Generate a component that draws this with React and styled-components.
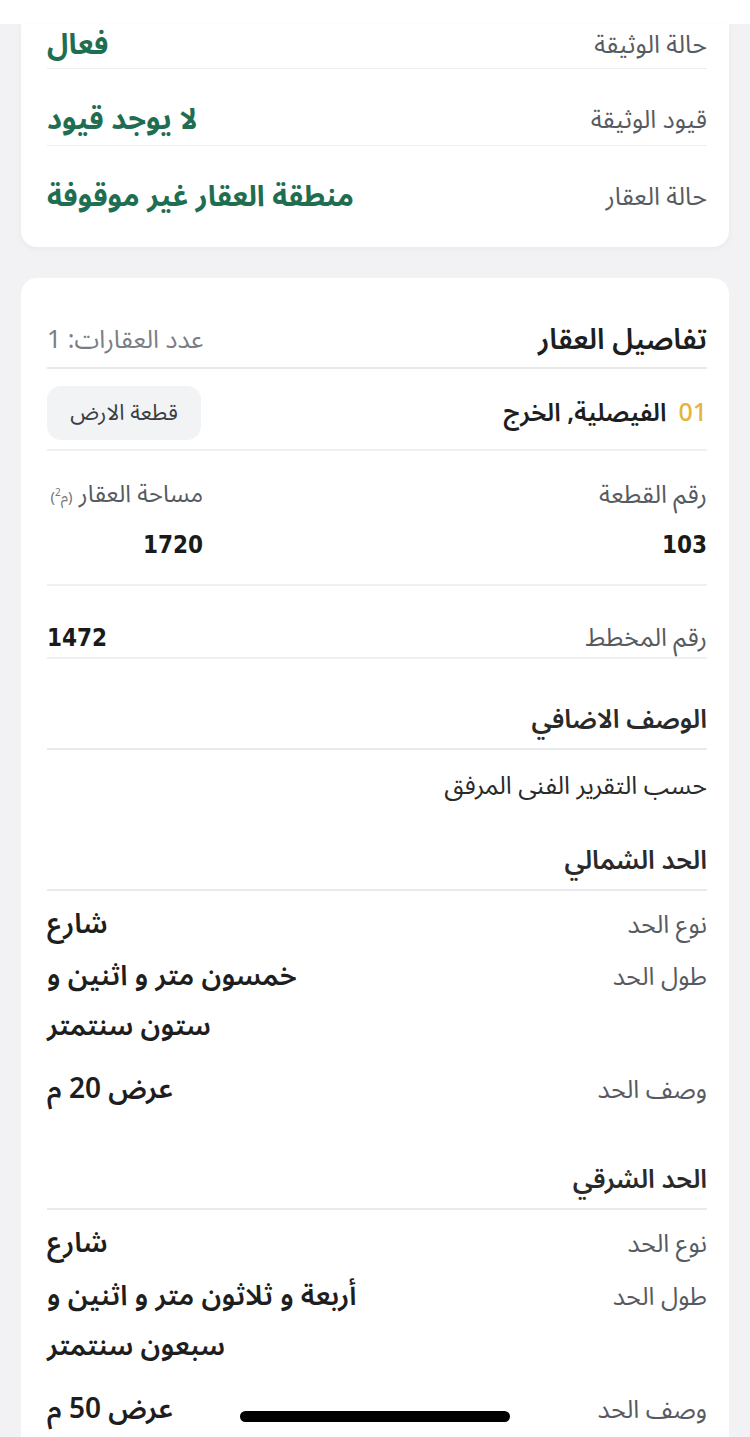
import React from 'react'
import styled, { createGlobalStyle } from 'styled-components'

const GlobalStyle = createGlobalStyle`
    html, body {
        margin:0;
        padding:0;
        background:#f2f2f4;
    }
    body {
        font-family:"Noto Sans Arabic", "DejaVu Sans", "Noto Sans", sans-serif;
    }
`

const statusRows = [
    { label: 'حالة الوثيقة', value: 'فعال' },
    { label: 'قيود الوثيقة', value: 'لا يوجد قيود' },
    { label: 'حالة العقار', value: 'منطقة العقار غير موقوفة' },
]

const borders = [
    {
        title: 'الحد الشمالي',
        top: 39,
        rows: [
            { label: 'نوع الحد', lines: ['شارع'], gap: 9 },
            { label: 'طول الحد', lines: ['خمسون متر و اثنين و', 'ستون سنتمتر'], gap: 2 },
            { label: 'وصف الحد', lines: ['عرض 20 م'], gap: 13 },
        ],
    },
    {
        title: 'الحد الشرقي',
        top: 47,
        rows: [
            { label: 'نوع الحد', lines: ['شارع'], gap: 9 },
            { label: 'طول الحد', lines: ['أربعة و ثلاثون متر و اثنين و', 'سبعون سنتمتر'], gap: 3 },
            { label: 'وصف الحد', lines: ['عرض 50 م'], gap: 13 },
        ],
    },
]

const App = () => {
    return (
        <>
            <GlobalStyle />
            <Page dir='rtl'>
                <TopBar />
                <StatusCard>
                    {statusRows.map((r, i) => (
                        <StatusRow key={r.label} $first={i === 0} $last={i === statusRows.length - 1}>
                            <Label>{r.label}</Label>
                            <GreenValue>{r.value}</GreenValue>
                        </StatusRow>
                    ))}
                </StatusCard>

                <DetailsCard>
                    <HeaderRow>
                        <Title>تفاصيل العقار</Title>
                        <Count>عدد العقارات: 1</Count>
                    </HeaderRow>
                    <PlaceRow>
                        <Place><Index>01</Index>الفيصلية, الخرج</Place>
                        <Chip>قطعة الارض</Chip>
                    </PlaceRow>
                    <InfoGrid>
                        <div>
                            <Label>رقم القطعة</Label>
                            <BigNumber>103</BigNumber>
                        </div>
                        <div>
                            <AreaLabel>مساحة العقار <Unit>(م<sup>2</sup>)</Unit></AreaLabel>
                            <BigNumber>1720</BigNumber>
                        </div>
                    </InfoGrid>
                    <PlanRow>
                        <Label>رقم المخطط</Label>
                        <Number>1472</Number>
                    </PlanRow>

                    <SectionTitle $top={43}>الوصف الاضافي</SectionTitle>
                    <Description>حسب التقرير الفنى المرفق</Description>

                    {borders.map(b => (
                        <Border key={b.title}>
                            <SectionTitle $top={b.top}>{b.title}</SectionTitle>
                            {b.rows.map(r => (
                                <BorderRow key={r.label} $gap={r.gap}>
                                    <Label>{r.label}</Label>
                                    <BorderValue>
                                        {r.lines.map(l => <div key={l}>{l}</div>)}
                                    </BorderValue>
                                </BorderRow>
                            ))}
                        </Border>
                    ))}
                </DetailsCard>
                <HomeIndicator />
            </Page>
        </>
    )
}

export default App

const Page = styled.div`
    width:750px;
    min-height:1437px;
    background:#f2f2f4;
    display:flex;
    flex-direction:column;
    align-items:center;
    overflow:hidden;
`

const TopBar = styled.div`
    width:100%;
    height:24px;
    background:#ffffff;
`

const Card = styled.div`
    width:708px;
    box-sizing:border-box;
    background:#ffffff;
    border-radius:16px;
    padding:0 22px 0 26px;
`

const StatusCard = styled(Card)`
    border-radius:0 0 16px 16px;
    padding-bottom:25px;
    box-shadow:0 2px 6px rgba(0,0,0,0.04);
`

const StatusRow = styled.div`
    display:flex;
    justify-content:space-between;
    align-items:center;
    line-height:36px;
    height:${p => p.$first ? '42px' : '50px'};
    padding-top:${p => p.$first ? '0' : '26px'};
    padding-bottom:${p => p.$first ? '2px' : '0'};
    border-bottom:${p => p.$last ? 'none' : '1px solid #eceef0'};
`

const Label = styled.div`
    font-size:25px;
    color:#575b61;
    line-height:inherit;
`

const AreaLabel = styled(Label)`
    font-size:24px;
    white-space:nowrap;
    height:36px;
`

const Unit = styled.span`
    font-size:15px;
    color:#777;
    line-height:0;
    sup{
        font-size:10px;
        line-height:0;
    }
`

const GreenValue = styled.div`
    font-size:29px;
    font-weight:700;
    color:#1f6e52;
`

const DetailsCard = styled(Card)`
    margin-top:31px;
    padding-top:42px;
    padding-bottom:40px;
    flex:1;
`

const HeaderRow = styled.div`
    display:flex;
    justify-content:space-between;
    align-items:center;
    line-height:40px;
    padding-bottom:7px;
    border-bottom:2px solid #e8eaee;
`

const Title = styled.div`
    font-size:29px;
    font-weight:600;
    color:#1e1e1e;
`

const Count = styled.div`
    font-size:25px;
    color:#7a7e83;
`

const PlaceRow = styled.div`
    display:flex;
    justify-content:space-between;
    align-items:center;
    padding:17px 0 9px;
    border-bottom:2px solid #eff0f2;
`

const Place = styled.div`
    font-size:25px;
    font-weight:600;
    color:#1e1e1e;
`

const Index = styled.span`
    color:#e6b43c;
    margin-left:12px;
    font-weight:500;
`

const Chip = styled.div`
    background:#f2f3f5;
    border-radius:14px;
    width:154px;
    height:54px;
    display:flex;
    align-items:center;
    justify-content:center;
    font-size:22px;
    color:#3a3d42;
`

const InfoGrid = styled.div`
    display:grid;
    grid-template-columns:1fr 156px;
    line-height:36px;
    padding:26px 0 21px;
    border-bottom:2px solid #eff0f2;
`

const BigNumber = styled.div`
    font-family:"DejaVu Sans Condensed", "DejaVu Sans", sans-serif;
    font-size:24px;
    font-weight:700;
    color:#1a1a1a;
    margin-top:14px;
`

const Number = styled.div`
    font-family:"DejaVu Sans Condensed", "DejaVu Sans", sans-serif;
    font-size:24px;
    font-weight:700;
    color:#1a1a1a;
`

const PlanRow = styled.div`
    display:flex;
    justify-content:space-between;
    align-items:center;
    line-height:34px;
    padding:35px 0 2px;
    border-bottom:2px solid #eff0f2;
`

const SectionTitle = styled.div`
    font-size:26px;
    font-weight:600;
    color:#2a2a2a;
    line-height:36px;
    padding:${p => p.$top}px 0 10px;
    border-bottom:2px solid #e8eaee;
`

const Description = styled.div`
    font-size:25px;
    color:#2a2a2a;
    line-height:36px;
    padding-top:18px;
`

const Border = styled.div`
    display:flex;
    flex-direction:column;
`

const BorderRow = styled.div`
    display:flex;
    justify-content:space-between;
    align-items:flex-start;
    line-height:50px;
    padding-top:${p => p.$gap}px;
`

const BorderValue = styled.div`
    font-size:28px;
    font-weight:600;
    color:#1e1e1e;
    text-align:left;
`

const HomeIndicator = styled.div`
    position:fixed;
    left:240px;
    top:1411px;
    width:270px;
    height:11px;
    border-radius:6px;
    background:#000;
`
